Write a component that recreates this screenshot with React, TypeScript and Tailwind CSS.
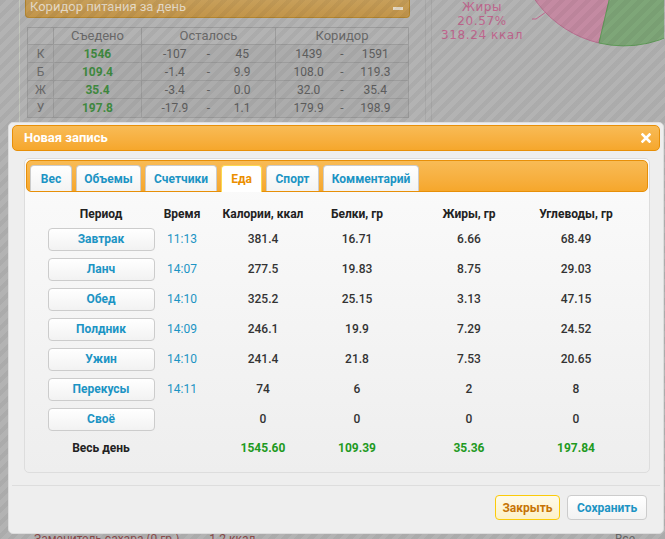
import React from "react";

const rows = [
  { p: "Завтрак", t: "11:13", k: "381.4", b: "16.71", j: "6.66", u: "68.49" },
  { p: "Ланч", t: "14:07", k: "277.5", b: "19.83", j: "8.75", u: "29.03" },
  { p: "Обед", t: "14:10", k: "325.2", b: "25.15", j: "3.13", u: "47.15" },
  { p: "Полдник", t: "14:09", k: "246.1", b: "19.9", j: "7.29", u: "24.52" },
  { p: "Ужин", t: "14:10", k: "241.4", b: "21.8", j: "7.53", u: "20.65" },
  { p: "Перекусы", t: "14:11", k: "74", b: "6", j: "2", u: "8" },
  { p: "Своё", t: "", k: "0", b: "0", j: "0", u: "0" },
];

const bgRows = [
  { l: "К", e: "1546", a: "-107", b: "45", c: "1439", d: "1591" },
  { l: "Б", e: "109.4", a: "-1.4", b: "9.9", c: "108.0", d: "119.3" },
  { l: "Ж", e: "35.4", a: "-3.4", b: "0.0", c: "32.0", d: "35.4" },
  { l: "У", e: "197.8", a: "-17.9", b: "1.1", c: "179.9", d: "198.9" },
];

const tabs = [
  { n: "Вес", w: "w-[42px]" },
  { n: "Объемы", w: "w-[65px]" },
  { n: "Счетчики", w: "w-[72px]" },
  { n: "Еда", w: "w-[41px]", active: true },
  { n: "Спорт", w: "w-[53px]" },
  { n: "Комментарий", w: "w-[96px]" },
];

function Cell({ w, children, cls = "" }: { w: string; children?: React.ReactNode; cls?: string }) {
  return <div className={`flex shrink-0 justify-center items-center whitespace-nowrap ${w} ${cls}`}>{children}</div>;
}

const cols = ["w-[130px]", "w-[32px]", "w-[130px]", "w-[58px]", "w-[166px]", "w-[48px]"];

export default function App() {
  return (
    <div className="relative w-[665px] h-[539px] overflow-hidden bg-[#b3b3b3] font-['Roboto',sans-serif] text-[12px]">
      {/* background page (dimmed) */}
      <div className="flex flex-col h-full">
        <div className="flex h-[122px]">
          <div className="w-[20px] shrink-0 border-r border-[#c3c7bd]" />
          <div className="w-[406px] shrink-0 pl-[5px] border-r border-[#a9a9a9]">
            <div className="w-[385px] h-[18px] rounded-b-[4px] border border-t-0 border-[#b3852f] bg-gradient-to-b from-[#c79f5a] to-[#c2954a] flex items-center justify-between pl-[4px] pr-[6px] text-[#e4d9c6] text-[13px] leading-none">
              <span className="-mt-[4px]">Коридор питания за день</span>
              <span className="w-[10px] h-[3px] bg-[#e4d9c6]" />
            </div>
            <div className="mt-[9px] ml-[2px] w-[382px] border border-[#9c9c9c] text-[#5e5e5e]">
              <div className="flex h-[17px] border-b border-[#9c9c9c] text-[#6a6a6a] text-[13px]">
                <div className="w-[26px] border-r border-[#9c9c9c]" />
                <div className="w-[88px] border-r border-[#9c9c9c] flex items-center justify-center">Съедено</div>
                <div className="w-[134px] border-r border-[#9c9c9c] flex items-center justify-center">Осталось</div>
                <div className="flex-1 flex items-center justify-center">Коридор</div>
              </div>
              {bgRows.map((r, i) => (
                <div key={i} className={`flex h-[18px] bg-[#acacac] ${i < 3 ? "border-b border-[#9c9c9c]" : ""}`}>
                  <div className="w-[26px] border-r border-[#9c9c9c] flex items-center justify-center text-[#6a6a6a]">{r.l}</div>
                  <div className="w-[88px] border-r border-[#9c9c9c] flex items-center justify-center text-[#3f8a3f] font-bold">{r.e}</div>
                  <div className="w-[134px] border-r border-[#9c9c9c] grid grid-cols-3 px-[16px] items-center text-center">
                    <span>{r.a}</span><span>-</span><span>{r.b}</span>
                  </div>
                  <div className="flex-1 grid grid-cols-3 px-[16px] items-center text-center">
                    <span>{r.c}</span><span>-</span><span>{r.d}</span>
                  </div>
                </div>
              ))}
            </div>
          </div>
          <div className="w-[6px] shrink-0 border-r border-[#a9a9a9]" />
          <div className="flex-1 flex">
            <div className="w-[100px] shrink-0 flex flex-col items-center text-[#c0668e] font-['DejaVu_Sans',sans-serif] text-[12px] tracking-[0.6px] leading-[14px]">
              <span>Жиры</span>
              <span>20.57%</span>
              <span>318.24 ккал</span>
            </div>
            <svg width="132" height="50" viewBox="0 0 132 50" className="shrink-0">
              <path d="M92 -63 L67 43 A109 109 0 0 1 -17 -63 Z" fill="#c48aa2" stroke="#b86f90" strokeWidth="1" />
              <path d="M92 -63 L67 43 A109 109 0 0 0 201 -63 Z" fill="#7ea678" stroke="#5f9a58" strokeWidth="1" />
              <path d="M0 19 L4 19 L14 12" fill="none" stroke="#c0668e" strokeWidth="1" />
            </svg>
          </div>
        </div>
        <div className="mt-auto flex h-[6px] items-start pl-[34px] text-[#8a4a4a] text-[12px] leading-[12px]">
          <span>Заменитель сахара (0 гр.)</span>
          <span className="ml-[30px]">1.2 ккал.</span>
          <span className="ml-auto mr-[30px] text-[#666]">Все</span>
        </div>
      </div>

      {/* overlay stripes */}
      <div className="absolute inset-0 bg-[repeating-linear-gradient(135deg,rgba(0,0,0,0.045)_0px,rgba(0,0,0,0.045)_4.6px,transparent_4.6px,transparent_9.2px)]" />

      {/* dialog */}
      <div className="absolute left-[8px] top-[122px] w-[656px] h-[412px] flex flex-col rounded-[5px] border border-[#dddddd] bg-[#eeeeee] pt-[2px] px-[3px]">
        <div className="h-[26px] shrink-0 rounded-[5px] border border-[#e78f08] bg-gradient-to-b from-[#f8bb55] to-[#f6a72b] flex items-center justify-between pl-[11px] pr-[8px] text-white font-bold text-[13px]">
          <span>Новая запись</span>
          <svg width="10" height="10" viewBox="0 0 10 10">
            <path d="M1.5 1.5 L8.5 8.5 M8.5 1.5 L1.5 8.5" stroke="#ffffff" strokeWidth="2.6" strokeLinecap="square" />
          </svg>
        </div>

        <div className="pl-[12px] pr-[10px] pt-[7px]">
          <div className="h-[315px] rounded-[5px] border border-[#dddddd] bg-gradient-to-b from-[#fbfbfb] to-[#eeeeee] p-[1px]">
            <div className="h-[32px] rounded-[5px] border border-[#e78f08] bg-gradient-to-b from-[#f8bb55] to-[#f6a72b] flex items-end gap-[4px] pt-[4px] px-[3px]">
              {tabs.map((t) =>
                t.active ? (
                  <div key={t.n} className={`${t.w} h-[27px] -mb-[1px] rounded-t-[4px] border border-b-0 border-[#fbd850] bg-white flex items-center justify-center text-[#eb8f00] font-bold text-[12px]`}>
                    {t.n}
                  </div>
                ) : (
                  <div key={t.n} className={`${t.w} h-[26px] rounded-t-[4px] border border-b-0 border-[#cccccc] bg-gradient-to-b from-[#ffffff] to-[#f3f3f3] flex items-center justify-center text-[#1c94c4] font-bold text-[12px]`}>
                    {t.n}
                  </div>
                )
              )}
            </div>

            <div className="ml-[10px] mt-[11px] flex flex-col">
              <div className="flex h-[21px] text-[#222222] font-bold">
                {["Период", "Время", "Калории, ккал", "Белки, гр", "Жиры, гр", "Углеводы, гр"].map((h, i) => (
                  <Cell key={h} w={cols[i]}>{h}</Cell>
                ))}
              </div>
              {rows.map((r) => (
                <div key={r.p} className="flex h-[30px] text-[#333333] font-medium">
                  <Cell w={cols[0]}>
                    <div className="w-[107px] h-[23px] shrink-0 rounded-[4px] border border-[#cccccc] bg-gradient-to-b from-[#ffffff] to-[#f2f2f2] flex items-center justify-center text-[#1c94c4] font-bold">
                      {r.p}
                    </div>
                  </Cell>
                  <Cell w={cols[1]} cls="text-[#1c94c4] font-normal">{r.t}</Cell>
                  <Cell w={cols[2]}>{r.k}</Cell>
                  <Cell w={cols[3]}>{r.b}</Cell>
                  <Cell w={cols[4]}>{r.j}</Cell>
                  <Cell w={cols[5]}>{r.u}</Cell>
                </div>
              ))}
              <div className="flex h-[28px] font-bold">
                <Cell w={cols[0]} cls="text-[#222222]">Весь день</Cell>
                <Cell w={cols[1]} />
                <Cell w={cols[2]} cls="text-[#1f9a1f]">1545.60</Cell>
                <Cell w={cols[3]} cls="text-[#1f9a1f]">109.39</Cell>
                <Cell w={cols[4]} cls="text-[#1f9a1f]">35.36</Cell>
                <Cell w={cols[5]} cls="text-[#1f9a1f]">197.84</Cell>
              </div>
            </div>
          </div>
        </div>

        <div className="mt-[12px] border-t border-[#dddddd] flex justify-end gap-[7px] pt-[9px] pr-[13px]">
          <div className="w-[65px] h-[25px] rounded-[4px] border border-[#fbcb09] bg-gradient-to-b from-[#fefaea] to-[#fdf1c6] flex items-center justify-center text-[#c77405] font-bold">
            Закрыть
          </div>
          <div className="w-[80px] h-[25px] rounded-[4px] border border-[#cccccc] bg-gradient-to-b from-[#ffffff] to-[#f2f2f2] flex items-center justify-center text-[#1c94c4] font-bold">
            Сохранить
          </div>
        </div>
      </div>
    </div>
  );
}
